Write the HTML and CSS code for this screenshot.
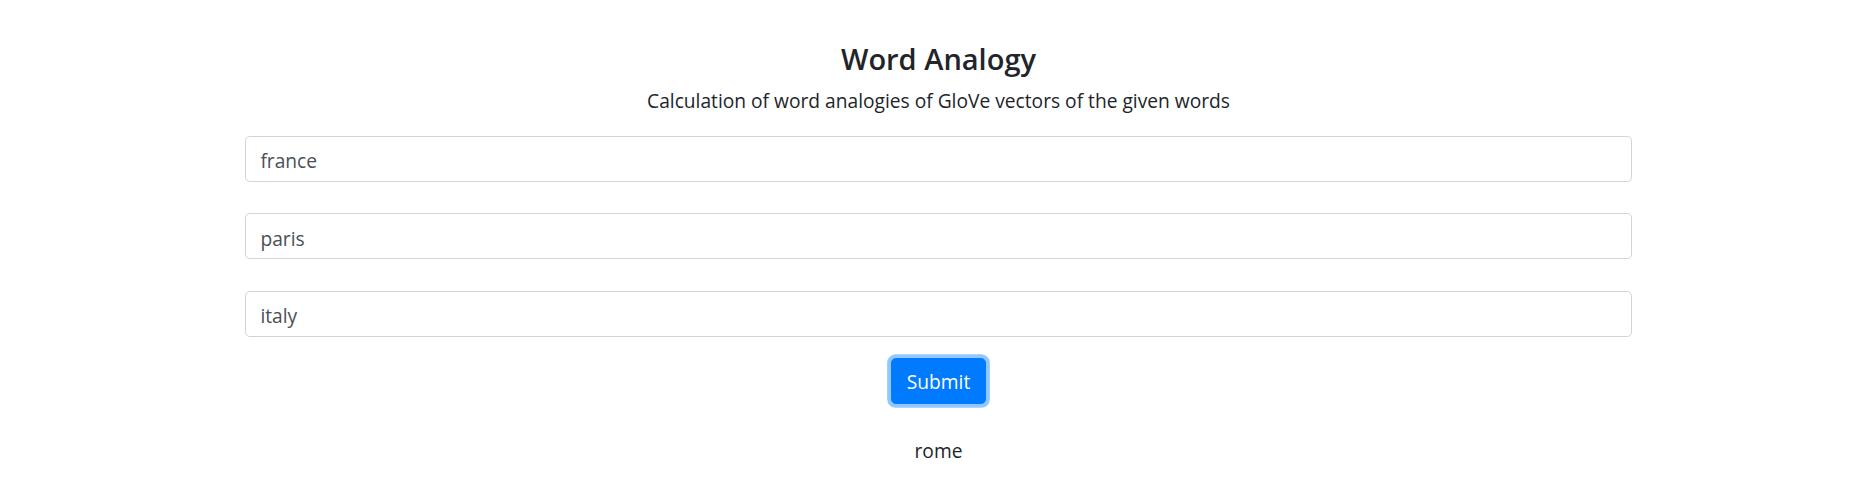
FILE: index.html
```html
<!DOCTYPE html>
<html lang="en">
<head>
<meta charset="utf-8">
<title>Word Analogy</title>
<link rel="stylesheet" href="styles.css">
</head>
<body>
<main class="page">
  <h3 class="title">Word Analogy</h3>
  <p class="subtitle">Calculation of word analogies of GloVe vectors of the given words</p>
  <form class="form">
    <input class="field" type="text" value="france">
    <input class="field" type="text" value="paris">
    <input class="field" type="text" value="italy">
    <button class="btn" type="button">Submit</button>
  </form>
  <p class="result">rome</p>
</main>
</body>
</html>
```

FILE: styles.css
```css
* { box-sizing: border-box; }
html, body { margin: 0; padding: 0; background: #fff; }
body {
  font-family: "Open Sans", "Noto Sans", sans-serif;
  font-size: 19.2px;
  line-height: 1.5;
  color: #212529;
}
.page {
  width: 1387px;
  margin: 0 0 0 calc(50% - 692.5px);
  padding-top: 39px;
  display: flex;
  flex-direction: column;
  align-items: center;
}
.title {
  margin: 0 0 8px;
  font-size: 29px;
  line-height: 40px;
  font-weight: 600;
  color: #212529;
}
.subtitle {
  margin: 0;
  font-size: 19.2px;
  line-height: 28.8px;
}
.form {
  width: 100%;
  margin-top: 20px;
  display: flex;
  flex-direction: column;
  align-items: center;
}
.field {
  display: block;
  width: 100%;
  height: 46px;
  margin: 0 0 31.5px;
  padding: 9px 14.4px 5px;
  font-family: inherit;
  font-size: 19.2px;
  color: #495057;
  background: #fff;
  border: 1px solid #ced4da;
  border-radius: 4.8px;
  outline: none;
}
.field:last-of-type { margin-bottom: 21px; }
.btn {
  height: 46px;
  padding: 9px 14.4px 5px;
  font-family: inherit;
  font-size: 19.2px;
  line-height: 1.5;
  color: #fff;
  background: #007bff;
  border: 1px solid #007bff;
  border-radius: 4.8px;
  box-shadow: 0 0 0 3.84px rgba(38, 143, 255, 0.5);
  cursor: pointer;
}
.result {
  margin: 33px 0 0;
  font-size: 19.2px;
  line-height: 28.8px;
}
```
